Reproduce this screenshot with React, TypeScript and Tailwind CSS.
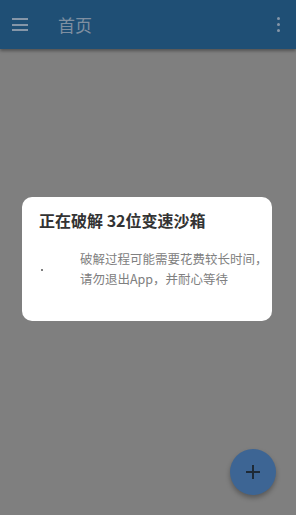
export default function App() {
  return (
    <div
      className="relative w-[296px] h-[515px] overflow-hidden bg-[#7f7f7f]"
      style={{ fontFamily: '"Noto Sans CJK SC", Roboto, sans-serif' }}
    >
      {/* top bar */}
      <div className="flex items-center h-[49px] bg-[#1f4f75] shadow-[0_2px_3px_rgba(0,0,0,0.35)]">
        <div className="flex flex-col gap-[3.5px] ml-[12px] w-[16px]">
          <span className="h-[2px] bg-[#8596a8]" />
          <span className="h-[2px] bg-[#8596a8]" />
          <span className="h-[2px] bg-[#8596a8]" />
        </div>
        <span className="ml-[30px] text-[17px] leading-none text-[#7f8fa1]">首页</span>
        <div className="ml-auto mr-[16px] flex flex-col gap-[2.5px] items-center">
          <span className="w-[3.5px] h-[3.5px] rounded-full bg-[#8596a8]" />
          <span className="w-[3.5px] h-[3.5px] rounded-full bg-[#8596a8]" />
          <span className="w-[3.5px] h-[3.5px] rounded-full bg-[#8596a8]" />
        </div>
      </div>

      {/* dialog */}
      <div className="absolute left-[22px] top-[197px] w-[250px] h-[124px] rounded-[10px] bg-white">
        <div className="pl-[17px] pt-[12px] text-[16px] font-semibold leading-[22px] text-[#333333]">
          正在破解 32位变速沙箱
        </div>
        <div className="flex items-center mt-[18px]">
          <span className="ml-[19px] mt-[1px] w-[2px] h-[2px] rounded-full bg-[#555555]" />
          <div className="ml-[37px] whitespace-nowrap text-[12.5px] leading-[20px] text-[#808080]">
            <div>破解过程可能需要花费较长时间，</div>
            <div>请勿退出App，并耐心等待</div>
          </div>
        </div>
      </div>

      {/* fab */}
      <div className="absolute left-[230px] top-[449px] w-[46px] h-[46px] rounded-full bg-[#3d6594] shadow-[0_3px_5px_rgba(0,0,0,0.3)] flex items-center justify-center">
        <svg width="16" height="16" viewBox="0 0 16 16">
          <path d="M8 1v14M1 8h14" stroke="#1e2a36" strokeWidth="2" />
        </svg>
      </div>
    </div>
  );
}
